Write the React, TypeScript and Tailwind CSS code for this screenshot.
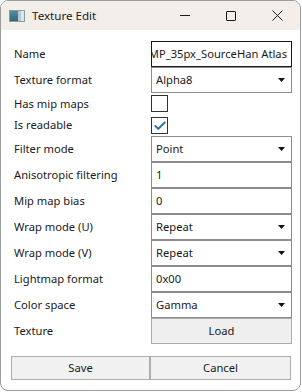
import { Check } from "lucide-react";

type Row =
  | { label: string; kind: "text"; value: string; focused?: boolean }
  | { label: string; kind: "select"; value: string }
  | { label: string; kind: "check"; checked: boolean; h: string }
  | { label: string; kind: "button"; value: string };

const rows: Row[] = [
  { label: "Name", kind: "text", value: "TMP_35px_SourceHan Atlas", focused: true },
  { label: "Texture format", kind: "select", value: "Alpha8" },
  { label: "Has mip maps", kind: "check", checked: false, h: "h-[22px]" },
  { label: "Is readable", kind: "check", checked: true, h: "h-[21px]" },
  { label: "Filter mode", kind: "select", value: "Point" },
  { label: "Anisotropic filtering", kind: "text", value: "1" },
  { label: "Mip map bias", kind: "text", value: "0" },
  { label: "Wrap mode (U)", kind: "select", value: "Repeat" },
  { label: "Wrap mode (V)", kind: "select", value: "Repeat" },
  { label: "Lightmap format", kind: "text", value: "0x00" },
  { label: "Color space", kind: "select", value: "Gamma" },
  { label: "Texture", kind: "button", value: "Load" },
];

function TitleBar() {
  return (
    <div className="h-[29px] bg-[#f3eeea] flex items-center shrink-0">
      <div className="ml-[8px] w-[16px] h-[12px] border border-[#8a9aa6] bg-[#dfe6ea] flex">
        <div className="w-[8px] h-full bg-gradient-to-b from-[#4f8f9d] to-[#2e6a78]" />
        <div className="w-[3px] h-full bg-[#b9c9d2]" />
      </div>
      <span className="ml-[7px] text-[11.6px] text-[#1b1b1b]">Texture Edit</span>
      <div className="ml-auto flex items-center h-full">
        <div className="w-[46px] h-full flex items-center justify-center">
          <div className="w-[10px] h-px bg-[#1b1b1b]" />
        </div>
        <div className="w-[46px] h-full flex items-center justify-center">
          <div className="w-[10px] h-[10px] border border-[#1b1b1b] rounded-[1px]" />
        </div>
        <div className="w-[46px] h-full flex items-center justify-center">
          <svg width="11" height="11" viewBox="0 0 11 11">
            <path d="M0.5 0.5 L10.5 10.5 M10.5 0.5 L0.5 10.5" stroke="#1b1b1b" strokeWidth="1" />
          </svg>
        </div>
      </div>
    </div>
  );
}

function Arrow() {
  return (
    <svg width="7" height="4" viewBox="0 0 7 4" className="shrink-0">
      <path d="M0 0 H7 L3.5 4 Z" fill="#111" />
    </svg>
  );
}

function Field({ row }: { row: Row }) {
  if (row.kind === "check") {
    return (
      <div className={`${row.h} flex items-start`}>
        <div className="mt-[2px] w-[17px] h-[17px] border border-[#333] bg-white flex items-center justify-center">
          {row.checked && <Check className="w-[14px] h-[14px] text-[#1f6fa6]" strokeWidth={3.2} />}
        </div>
      </div>
    );
  }
  if (row.kind === "button") {
    return (
      <div className="h-[26px] border border-[#adadad] bg-[#efefef] flex items-center justify-center text-[11.2px] text-[#1a1a1a]">
        {row.value}
      </div>
    );
  }
  if (row.kind === "select") {
    return (
      <div className="h-[26px] border border-[#8c8c8c] bg-white flex items-center pl-[4px] pr-[6px] text-[11.2px] text-[#1a1a1a]">
        <span className="flex-1">{row.value}</span>
        <Arrow />
      </div>
    );
  }
  return (
    <div
      className={`h-[26px] border bg-white flex items-center overflow-hidden whitespace-nowrap text-[11.2px] text-[#1a1a1a] ${
        row.focused ? "border-[#1a1a1a] justify-end pr-[4px]" : "border-[#8c8c8c] pl-[4px]"
      }`}
    >
      {row.value}
    </div>
  );
}

export default function App() {
  return (
    <div className="w-[302px] h-[392px] bg-white" style={{ fontFamily: '"Noto Sans", sans-serif' }}>
      <div className="w-[301px] h-[391px] border border-[#9c9c9c] rounded-[8px] overflow-hidden flex flex-col bg-white">
        <TitleBar />
        <div className="pt-[11px] pl-[13px] grid grid-cols-[137px_141px]">
          {rows.map((row) => (
            <div key={row.label} className="contents">
              <div className="flex items-center text-[11.2px] text-[#1a1a1a] whitespace-nowrap">{row.label}</div>
              <Field row={row} />
            </div>
          ))}
        </div>
        <div className="mt-[12px] pl-[10px] flex">
          <button className="w-[139px] h-[24px] border border-[#adadad] bg-[#f1f1f1] text-[11.2px] text-[#1a1a1a]">
            Save
          </button>
          <button className="w-[141px] h-[24px] border border-[#adadad] bg-[#f1f1f1] text-[11.2px] text-[#1a1a1a]">
            Cancel
          </button>
        </div>
      </div>
    </div>
  );
}
